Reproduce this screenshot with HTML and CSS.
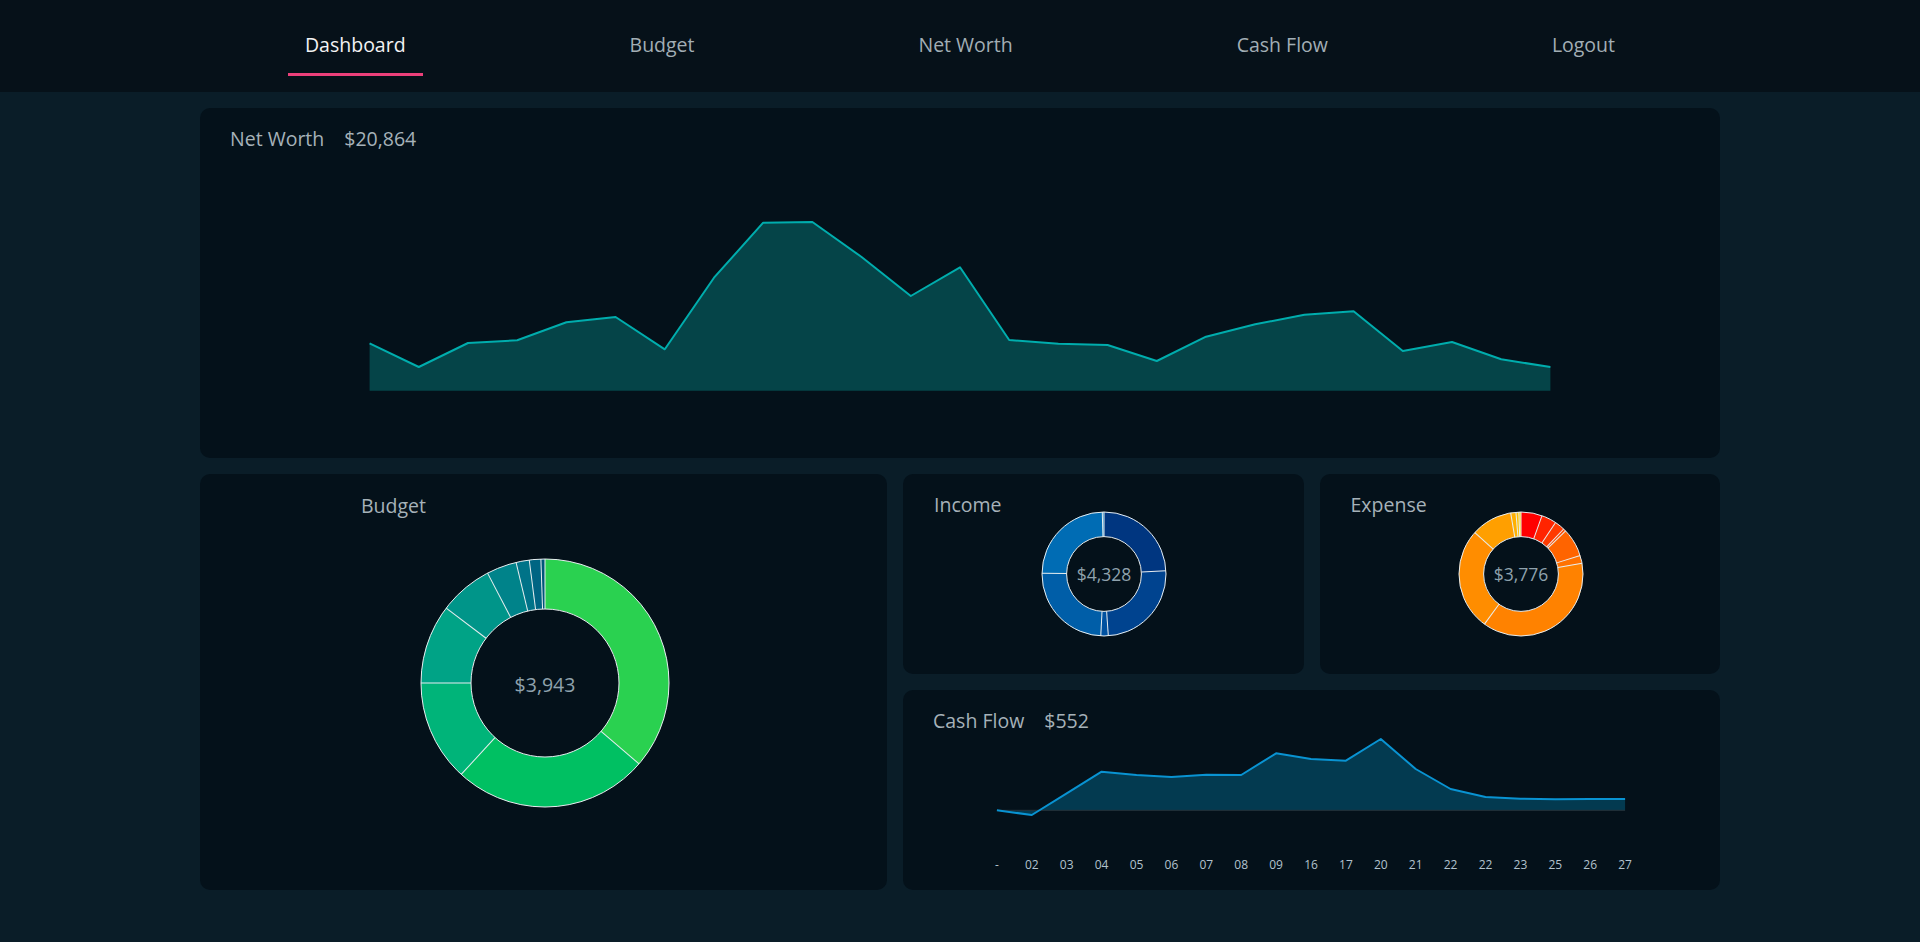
FILE: index.html
```html
<!DOCTYPE html>
<html lang="en">
<head>
<meta charset="utf-8">
<title>Dashboard</title>
<link rel="stylesheet" href="styles.css">
</head>
<body>
<nav class="topnav">
  <div class="nav-inner">
    <a class="nav-item active">Dashboard</a>
    <a class="nav-item">Budget</a>
    <a class="nav-item">Net Worth</a>
    <a class="nav-item">Cash Flow</a>
    <a class="nav-item">Logout</a>
  </div>
</nav>
<main class="dashboard">
  <section class="card card-networth">
    <h2 class="card-title"><span>Net Worth</span><span>$20,864</span></h2>
    <svg class="chart networth-chart" viewBox="0 0 1520 308" width="1520" height="308">
      <path class="nw-area" d="M169.6,240.7 L169.6,193.3 L218.8,217 L268,193 L317.2,190.3 L366.4,172.3 L415.6,167 L464.8,199.3 L514,127.7 L563.2,72.7 L612.4,72 L661.6,107 L710.8,146 L760,117.3 L809.2,190 L858.4,193.7 L907.6,195 L956.8,211 L1006,186.7 L1055.2,174.3 L1104.4,164.7 L1153.6,161.3 L1202.8,201 L1252,192 L1301.2,209.3 L1350.4,217 L1350.4,240.7 Z"/>
      <polyline class="nw-line" points="169.6,193.3 218.8,217 268,193 317.2,190.3 366.4,172.3 415.6,167 464.8,199.3 514,127.7 563.2,72.7 612.4,72 661.6,107 710.8,146 760,117.3 809.2,190 858.4,193.7 907.6,195 956.8,211 1006,186.7 1055.2,174.3 1104.4,164.7 1153.6,161.3 1202.8,201 1252,192 1301.2,209.3 1350.4,217"/>
    </svg>
  </section>

  <section class="card card-budget">
    <h2 class="card-title budget-title">Budget</h2>
    <svg class="donut donut-large" viewBox="-125 -125 250 250" width="250" height="250">
      <g transform="rotate(-90)" class="ring ring-large">
        <circle r="99" pathLength="360" stroke="#2ad150" stroke-dasharray="131.5 360" stroke-dashoffset="0"/>
        <circle r="99" pathLength="360" stroke="#00c062" stroke-dasharray="92.6 360" stroke-dashoffset="-130.7"/>
        <circle r="99" pathLength="360" stroke="#00b479" stroke-dasharray="48.3 360" stroke-dashoffset="-222.5"/>
        <circle r="99" pathLength="360" stroke="#00a386" stroke-dasharray="38 360" stroke-dashoffset="-269.8"/>
        <circle r="99" pathLength="360" stroke="#009589" stroke-dasharray="26 360" stroke-dashoffset="-307.2"/>
        <circle r="99" pathLength="360" stroke="#00838a" stroke-dasharray="14.9 360" stroke-dashoffset="-332.4"/>
        <circle r="99" pathLength="360" stroke="#007388" stroke-dasharray="7 360" stroke-dashoffset="-346.5"/>
        <circle r="99" pathLength="360" stroke="#006583" stroke-dasharray="6 360" stroke-dashoffset="-352.7"/>
        <circle r="99" pathLength="360" stroke="#00567a" stroke-dasharray="1.9 360" stroke-dashoffset="-358.1"/>
      </g>
      <g class="sep">
        <circle r="124"/><circle r="74"/>
        <line y1="-74" y2="-124" transform="rotate(0)"/>
        <line y1="-74" y2="-124" transform="rotate(130.7)"/>
        <line y1="-74" y2="-124" transform="rotate(222.5)"/>
        <line y1="-74" y2="-124" transform="rotate(270)"/>
        <line y1="-74" y2="-124" transform="rotate(307.2)"/>
        <line y1="-74" y2="-124" transform="rotate(332.4)"/>
        <line y1="-74" y2="-124" transform="rotate(346.5)"/>
        <line y1="-74" y2="-124" transform="rotate(352.7)"/>
        <line y1="-74" y2="-124" transform="rotate(358.1)"/>
      </g>
      <text class="donut-value donut-value-large" x="0" y="8.5">$3,943</text>
    </svg>
  </section>

  <section class="card card-small card-income">
    <h2 class="card-title">Income</h2>
    <svg class="donut donut-small" viewBox="-63 -63 126 126" width="126" height="126">
      <g transform="rotate(-90)" class="ring ring-small">
        <circle r="49.7" pathLength="360" stroke="#003680" stroke-dasharray="87.8 360" stroke-dashoffset="0"/>
        <circle r="49.7" pathLength="360" stroke="#00438f" stroke-dasharray="89.8 360" stroke-dashoffset="-87"/>
        <circle r="49.7" pathLength="360" stroke="#0051a0" stroke-dasharray="7.8 360" stroke-dashoffset="-176"/>
        <circle r="49.7" pathLength="360" stroke="#005ea8" stroke-dasharray="88.4 360" stroke-dashoffset="-183"/>
        <circle r="49.7" pathLength="360" stroke="#006cb4" stroke-dasharray="88.6 360" stroke-dashoffset="-270.6"/>
        <circle r="49.7" pathLength="360" stroke="#0079be" stroke-dasharray="1.6 360" stroke-dashoffset="-358.4"/>
      </g>
      <g class="sep">
        <circle r="62"/><circle r="37.4"/>
        <line y1="-37.4" y2="-62" transform="rotate(0)"/>
        <line y1="-37.4" y2="-62" transform="rotate(87)"/>
        <line y1="-37.4" y2="-62" transform="rotate(176)"/>
        <line y1="-37.4" y2="-62" transform="rotate(183)"/>
        <line y1="-37.4" y2="-62" transform="rotate(270.6)"/>
        <line y1="-37.4" y2="-62" transform="rotate(358.4)"/>
      </g>
      <text class="donut-value" x="0" y="7">$4,328</text>
    </svg>
  </section>

  <section class="card card-small card-expense">
    <h2 class="card-title">Expense</h2>
    <svg class="donut donut-small" viewBox="-63 -63 126 126" width="126" height="126">
      <g transform="rotate(-90)" class="ring ring-small">
        <circle r="49.7" pathLength="360" stroke="#ff0000" stroke-dasharray="20.6 360" stroke-dashoffset="0"/>
        <circle r="49.7" pathLength="360" stroke="#ff2400" stroke-dasharray="14.9 360" stroke-dashoffset="-19.8"/>
        <circle r="49.7" pathLength="360" stroke="#ff3a00" stroke-dasharray="10.4 360" stroke-dashoffset="-33.9"/>
        <circle r="49.7" pathLength="360" stroke="#ff4c00" stroke-dasharray="3.3 360" stroke-dashoffset="-43.5"/>
        <circle r="49.7" pathLength="360" stroke="#ff6400" stroke-dasharray="27.5 360" stroke-dashoffset="-46"/>
        <circle r="49.7" pathLength="360" stroke="#ff7200" stroke-dasharray="8.1 360" stroke-dashoffset="-72.7"/>
        <circle r="49.7" pathLength="360" stroke="#ff8200" stroke-dasharray="136.9 360" stroke-dashoffset="-80"/>
        <circle r="49.7" pathLength="360" stroke="#ff8d00" stroke-dasharray="96.6 360" stroke-dashoffset="-216.1"/>
        <circle r="49.7" pathLength="360" stroke="#ff9f00" stroke-dasharray="39.3 360" stroke-dashoffset="-311.9"/>
        <circle r="49.7" pathLength="360" stroke="#ffb000" stroke-dasharray="5.7 360" stroke-dashoffset="-350.4"/>
        <circle r="49.7" pathLength="360" stroke="#ffc000" stroke-dasharray="3.5 360" stroke-dashoffset="-355.3"/>
        <circle r="49.7" pathLength="360" stroke="#ffd000" stroke-dasharray="2 360" stroke-dashoffset="-358"/>
      </g>
      <g class="sep">
        <circle r="62"/><circle r="37.4"/>
        <line y1="-37.4" y2="-62" transform="rotate(0)"/>
        <line y1="-37.4" y2="-62" transform="rotate(19.8)"/>
        <line y1="-37.4" y2="-62" transform="rotate(33.9)"/>
        <line y1="-37.4" y2="-62" transform="rotate(43.5)"/>
        <line y1="-37.4" y2="-62" transform="rotate(46)"/>
        <line y1="-37.4" y2="-62" transform="rotate(72.7)"/>
        <line y1="-37.4" y2="-62" transform="rotate(80)"/>
        <line y1="-37.4" y2="-62" transform="rotate(216.1)"/>
        <line y1="-37.4" y2="-62" transform="rotate(311.9)"/>
        <line y1="-37.4" y2="-62" transform="rotate(350.4)"/>
        <line y1="-37.4" y2="-62" transform="rotate(355.3)"/>
        <line y1="-37.4" y2="-62" transform="rotate(358)"/>
      </g>
      <text class="donut-value" x="0" y="7">$3,776</text>
    </svg>
  </section>

  <section class="card card-cashflow">
    <h2 class="card-title"><span>Cash Flow</span><span>$552</span></h2>
    <svg class="chart cashflow-chart" viewBox="0 0 816 157" width="816" height="157">
      <path class="cf-area" d="M93.9,78.3 L128.8,83 L163.7,61.3 L198.6,39.7 L233.5,43 L268.4,45 L303.3,42.7 L338.2,43 L373.1,21.3 L408,27 L442.9,28.7 L477.8,7 L512.7,37 L547.6,57 L582.5,65 L617.4,66.7 L652.3,67.3 L687.2,67 L722.1,67 L722.1,78.3 Z"/>
      <line class="cf-base" x1="93.9" y1="78.3" x2="722.1" y2="78.3"/>
      <polyline class="cf-line" points="93.9,78.3 128.8,83 163.7,61.3 198.6,39.7 233.5,43 268.4,45 303.3,42.7 338.2,43 373.1,21.3 408,27 442.9,28.7 477.8,7 512.7,37 547.6,57 582.5,65 617.4,66.7 652.3,67.3 687.2,67 722.1,67"/>
      <g class="axis-labels">
        <text x="93.9" y="137">-</text>
        <text x="128.8" y="137">02</text>
        <text x="163.7" y="137">03</text>
        <text x="198.6" y="137">04</text>
        <text x="233.5" y="137">05</text>
        <text x="268.4" y="137">06</text>
        <text x="303.3" y="137">07</text>
        <text x="338.2" y="137">08</text>
        <text x="373.1" y="137">09</text>
        <text x="408" y="137">16</text>
        <text x="442.9" y="137">17</text>
        <text x="477.8" y="137">20</text>
        <text x="512.7" y="137">21</text>
        <text x="547.6" y="137">22</text>
        <text x="582.5" y="137">22</text>
        <text x="617.4" y="137">23</text>
        <text x="652.3" y="137">25</text>
        <text x="687.2" y="137">26</text>
        <text x="722.1" y="137">27</text>
      </g>
    </svg>
  </section>
</main>
</body>
</html>
```

FILE: styles.css
```css
* {
  box-sizing: border-box;
}

html,
body {
  margin: 0;
  padding: 0;
}

body {
  background: #0a1d28;
  font-family: "Open Sans", "Noto Sans", sans-serif;
  color: #a8b3b9;
  min-height: 942px;
}

/* ---------- top navigation ---------- */
.topnav {
  background: #061119;
  height: 92px;
}

.nav-inner {
  width: 1534px;
  margin: 0 auto;
  display: flex;
  justify-content: space-around;
  align-items: flex-start;
}

.nav-item {
  display: block;
  padding: 33px 17px 16px;
  line-height: 24px;
  font-size: 19.5px;
  color: #a2aeb5;
  text-decoration: none;
  border-bottom: 3px solid transparent;
  cursor: pointer;
}

.nav-item.active {
  color: #f3f3f3;
  border-bottom-color: #ec407a;
}

/* ---------- dashboard grid ---------- */
.dashboard {
  width: 1520px;
  margin: 16px auto 0;
  display: grid;
  grid-template-columns: 687px 1fr 1fr;
  grid-template-rows: 350px 200px 200px;
  gap: 16px;
}

.card {
  background: #04111a;
  border-radius: 10px;
  overflow: hidden;
}

.card-title {
  margin: 0;
  padding: 19px 30px 0;
  font-size: 19.5px;
  line-height: 24px;
  font-weight: 400;
  color: #a6b2b9;
  display: flex;
  gap: 20px;
}

.chart {
  display: block;
}

/* net worth */
.card-networth {
  grid-column: 1 / 4;
  grid-row: 1;
}

.card-networth .card-title {
  height: 42px;
}

.nw-area {
  fill: #054448;
}

.nw-line {
  fill: none;
  stroke: #00adad;
  stroke-width: 2;
  stroke-linejoin: round;
}

/* donuts */
.card-budget {
  grid-column: 1;
  grid-row: 2 / 4;
  display: grid;
}

.card-small {
  display: grid;
}

.card-income {
  grid-column: 2;
  grid-row: 2;
}

.card-expense {
  grid-column: 3;
  grid-row: 2;
}

.card-budget > *,
.card-small > * {
  grid-area: 1 / 1;
}

.card-budget .card-title,
.card-small .card-title {
  align-self: start;
}

.budget-title {
  padding-left: 161px;
  padding-top: 20px;
}

.card-small .card-title {
  padding-left: 31px;
}

.donut {
  place-self: center;
  display: block;
  overflow: visible;
}

.donut-large {
  margin-left: 3px;
  margin-top: 2px;
}

.donut-small {
  margin-left: 2px;
}

.ring circle {
  fill: none;
}

.ring-large circle {
  stroke-width: 50;
}

.ring-small circle {
  stroke-width: 24.6;
}

.sep circle {
  fill: none;
  stroke: #e8eef0;
  stroke-width: 1;
}

.sep line {
  stroke: #e8eef0;
  stroke-width: 1;
}

.donut-value {
  font-family: "Open Sans", "Noto Sans", sans-serif;
  font-size: 17.5px;
  fill: #8fa2ad;
  text-anchor: middle;
}

.donut-value-large {
  font-size: 19.5px;
}

/* cash flow */
.card-cashflow {
  grid-column: 2 / 4;
  grid-row: 3;
}

.card-cashflow .card-title {
  height: 42px;
}

.cf-area {
  fill: #033a50;
}

.cf-base {
  stroke: #26343c;
  stroke-width: 1;
}

.cf-line {
  fill: none;
  stroke: #0993d2;
  stroke-width: 2;
  stroke-linejoin: round;
}

.axis-labels text {
  font-family: "Open Sans", "Noto Sans", sans-serif;
  font-size: 12px;
  fill: #b2c2cd;
  text-anchor: middle;
}
```
